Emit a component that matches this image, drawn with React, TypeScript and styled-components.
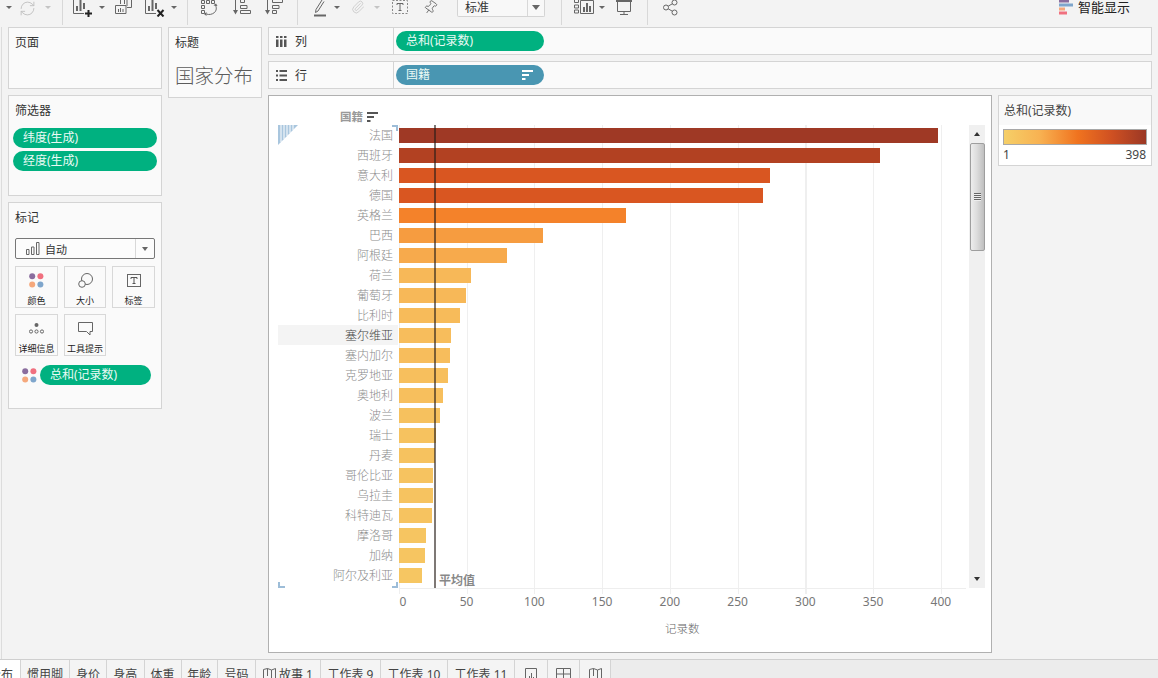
import React from "react";
import styled, { createGlobalStyle } from "styled-components";
import { RefreshCw, Paperclip, Pin } from "lucide-react";

const FONT = '"Noto Sans", "Noto Sans CJK SC", sans-serif';

const Global = createGlobalStyle`
  html, body { margin: 0; padding: 0; background: #f3f3f3; }
  body { font-family: ${FONT}; font-size: 12px; color: #333; }
`;

const Root = styled.div`
  width: 1158px;
  height: 678px;
  overflow: hidden;
  display: flex;
  flex-direction: column;
  background: #f3f3f3;
`;

const Toolbar = styled.div`
  height: 27px;
  flex: none;
  display: flex;
  align-items: flex-start;
`;

const Tool = styled.span<{ $ml: number; $w: number; $tint?: string }>`
  flex: none;
  display: flex;
  margin-left: ${(p) => p.$ml}px;
  width: ${(p) => p.$w}px;
  height: 17px;
  overflow: hidden;
  color: ${(p) => p.$tint ?? "#666"};
  svg { display: block; flex: none; }
`;

const ToolCaret = styled.i<{ $ml: number; $light?: boolean }>`
  flex: none;
  margin: 6px 0 0 ${(p) => p.$ml}px;
  border: 3px solid transparent;
  border-bottom-width: 0;
  border-top: 3px solid ${(p) => (p.$light ? "#c4c4c4" : "#666")};
`;

const Sep = styled.i<{ $ml: number }>`
  flex: none;
  margin-left: ${(p) => p.$ml}px;
  width: 1px;
  height: 25px;
  background: #d8d8d8;
`;

const Combo = styled.div`
  flex: none;
  margin-left: 19px;
  width: 88px;
  height: 17px;
  box-sizing: border-box;
  display: flex;
  background: #f8f8f8;
  border: 1px solid #d4d4d4;
  border-top: none;
  border-radius: 0 0 2px 2px;
`;

const ComboText = styled.span`
  flex: 1;
  padding-left: 7px;
  font-size: 12px;
  line-height: 16px;
  color: #333;
`;

const ComboArrow = styled.span`
  flex: none;
  width: 17px;
  border-left: 1px solid #d8d8d8;
  display: flex;
  justify-content: center;
  padding-top: 5px;
  box-sizing: border-box;
  &::after {
    content: "";
    height: 0;
    border: 4px solid transparent;
    border-bottom: 0;
    border-top: 5px solid #666;
  }
`;

const Smart = styled.div`
  margin-left: auto;
  padding-right: 28px;
  display: flex;
  gap: 5px;
  height: 15px;
`;

const SmartText = styled.span`
  font-size: 13px;
  line-height: 15px;
  color: #222;
`;

const Main = styled.div`
  flex: none;
  height: 632px;
  margin-left: 1px;
  border-left: 1px solid #dcdcdc;
  padding: 0 6px;
  display: flex;
  gap: 6px;
`;

const Column = styled.div<{ $w: number }>`
  flex: none;
  width: ${(p) => p.$w}px;
  display: flex;
  flex-direction: column;
  gap: 6px;
`;

const Panel = styled.section<{ $h: number }>`
  flex: none;
  box-sizing: border-box;
  height: ${(p) => p.$h}px;
  border: 1px solid #d4d4d4;
  background: #fafafa;
  padding: 7px 6px 0;
`;

const PanelTitle = styled.div`
  font-size: 12px;
  line-height: 16px;
  color: #333;
`;

const SheetTitle = styled.div`
  margin-top: 11px;
  font-size: 19.5px;
  line-height: 28px;
  font-weight: 300;
  color: #5c5c5c;
  white-space: nowrap;
`;

const FilterList = styled.div`
  margin: 9px -2px 0;
  display: flex;
  flex-direction: column;
  gap: 3px;
`;

const Pill = styled.div<{ $color?: string; $w?: number }>`
  box-sizing: border-box;
  flex: none;
  height: 20px;
  width: ${(p) => (p.$w ? `${p.$w}px` : "auto")};
  border-radius: 10px;
  padding: 0 11px 0 10px;
  background: ${(p) => p.$color ?? "#00b180"};
  color: #eafaf5;
  font-size: 12px;
  line-height: 20px;
  display: flex;
  justify-content: space-between;
  align-items: center;
  white-space: nowrap;
`;

const MarkSelect = styled.div`
  margin-top: 12px;
  width: 140px;
  height: 21px;
  box-sizing: border-box;
  border: 1px solid #777;
  border-radius: 2px;
  background: #fcfcfc;
  display: flex;
  align-items: center;
`;

const MarkSelectBody = styled.div`
  flex: 1;
  display: flex;
  align-items: center;
  gap: 5px;
  padding-left: 10px;
  font-size: 11px;
  color: #333;
`;

const MarkSelectArrow = styled.div`
  flex: none;
  align-self: stretch;
  width: 18px;
  border-left: 1px solid #d8d8d8;
  display: flex;
  align-items: center;
  justify-content: center;
  &::after {
    content: "";
    border: 3.5px solid transparent;
    border-bottom: 0;
    border-top: 4px solid #666;
  }
`;

const MarkGrid = styled.div`
  margin-top: 7px;
  display: grid;
  grid-template-columns: 43px 42px 43px;
  grid-auto-rows: 42px;
  gap: 6px;
`;

const MarkCard = styled.div`
  box-sizing: border-box;
  border: 1px solid #d8d8d8;
  display: flex;
  flex-direction: column;
  align-items: center;
  padding-top: 5px;
`;

const MarkIcon = styled.div`
  height: 18px;
  display: flex;
  align-items: center;
  justify-content: center;
  svg { display: block; }
`;

const MarkLabel = styled.div`
  margin-top: 6px;
  font-size: 9px;
  line-height: 12px;
  color: #222;
  white-space: nowrap;
`;

const MarkField = styled.div`
  margin: 9px 0 0 7px;
  display: flex;
  align-items: center;
  gap: 3px;
`;

const ShelfRow = styled.div`
  flex: none;
  box-sizing: border-box;
  height: 28px;
  border: 1px solid #d4d4d4;
  background: #fafafa;
  display: flex;
  align-items: center;
`;

const ShelfHead = styled.div`
  flex: none;
  box-sizing: border-box;
  width: 125px;
  height: 100%;
  border-right: 1px solid #d4d4d4;
  padding-left: 7px;
  display: flex;
  align-items: center;
  gap: 8px;
  color: #333;
  font-size: 12px;
`;

const ShelfPills = styled.div`
  margin-left: 2px;
  display: flex;
`;

const SortGlyph = styled.svg`
  display: block;
  flex: none;
`;

const SortSlot = styled.span`
  padding-top: 3px;
`;

const ContentRow = styled.div`
  display: flex;
  gap: 6px;
  align-items: flex-start;
`;

const ChartPanel = styled.div`
  flex: none;
  box-sizing: border-box;
  width: 724px;
  height: 558px;
  border: 1px solid #b0b0b0;
  background: #fff;
  display: flex;
  flex-direction: column;
`;

const ChartHead = styled.div`
  flex: none;
  height: 29px;
  width: 109px;
  box-sizing: border-box;
  padding-top: 13px;
  display: flex;
  justify-content: flex-end;
  gap: 4px;
  font-size: 11.5px;
  font-weight: 700;
  line-height: 16px;
  color: #999;
`;

const ChartBody = styled.div`
  flex: none;
  position: relative;
  height: 464px;
  display: flex;
  padding-left: 9px;
`;

const NameColumn = styled.div`
  flex: none;
  width: 120px;
`;

const NameRow = styled.div<{ $active?: boolean }>`
  box-sizing: border-box;
  height: 20px;
  padding-right: 5px;
  text-align: right;
  font-size: 12px;
  line-height: 21px;
  font-weight: 300;
  color: ${(p) => (p.$active ? "#444" : "#8c8c8c")};
  background: ${(p) => (p.$active ? "#f4f4f4" : "transparent")};
`;

const BarColumn = styled.div`
  flex: none;
  box-sizing: border-box;
  margin-left: 0.5px;
  width: 567px;
  height: 469px;
  background-image:
    linear-gradient(#eeeeee, #eeeeee),
    repeating-linear-gradient(90deg, #efefef 0 1px, transparent 1px 67.75px);
  background-size: 100% 1px, 100% 100%;
  background-position: 0 463px, 0 0;
  background-repeat: no-repeat;
`;

const BarRow = styled.div`
  height: 20px;
  box-sizing: border-box;
  padding-top: 3px;
`;

const Bar = styled.div<{ $color: string }>`
  height: 15px;
  background: ${(p) => p.$color};
`;

const MeanLine = styled.div`
  position: absolute;
  left: 165px;
  top: 0;
  width: 2px;
  height: 463px;
  background: rgba(40, 30, 25, 0.6);
`;

const MeanLabel = styled.div`
  position: absolute;
  left: 170px;
  top: 448px;
  font-size: 12px;
  line-height: 16px;
  font-weight: 700;
  color: #888;
`;

const Corner = styled.svg<{ $x: number; $y: number }>`
  position: absolute;
  left: ${(p) => p.$x}px;
  top: ${(p) => p.$y}px;
  display: block;
`;

const ScrollBar = styled.div`
  flex: none;
  margin-left: 3.5px;
  width: 16px;
  height: 463px;
  background: #f0f0f0;
  display: flex;
  flex-direction: column;
  align-items: center;
`;

const ScrollButton = styled.div<{ $down?: boolean }>`
  flex: none;
  height: 18px;
  width: 100%;
  display: flex;
  align-items: center;
  justify-content: center;
  &::after {
    content: "";
    border: 3.5px solid transparent;
    ${(p) =>
      p.$down
        ? "border-bottom: 0; border-top: 4px solid #333;"
        : "border-top: 0; border-bottom: 4px solid #333;"}
  }
`;

const ScrollThumb = styled.div`
  flex: none;
  box-sizing: border-box;
  width: 15px;
  height: 108px;
  border: 1px solid #9e9e9e;
  border-radius: 2px;
  background: linear-gradient(90deg, #ededed 0%, #dcdcdc 45%, #bfbfbf 100%);
  display: flex;
  align-items: center;
  justify-content: center;
`;

const ScrollGrip = styled.div`
  width: 7px;
  height: 8px;
  background: repeating-linear-gradient(#666 0 1px, #eee 1px 2px);
`;

const ScrollSpace = styled.div`
  flex: 1;
`;

const TickRow = styled.div`
  flex: none;
  margin-left: 96px;
  display: flex;
  height: 26px;
  align-items: center;
`;

const Tick = styled.div<{ $first?: boolean }>`
  flex: none;
  box-sizing: border-box;
  width: 67.75px;
  padding-left: ${(p) => (p.$first ? 8 : 0)}px;
  text-align: center;
  font-size: 12px;
  line-height: 16px;
  color: #777;
`;

const AxisTitle = styled.div`
  flex: none;
  margin: 6px 0 0 396px;
  font-size: 11.5px;
  line-height: 16px;
  font-weight: 300;
  color: #666;
`;

const LegendPanel = styled.div`
  flex: none;
  box-sizing: border-box;
  width: 154px;
  height: 71px;
  border: 1px solid #d4d4d4;
  background: #fff;
`;

const LegendHead = styled.div`
  height: 29px;
  padding: 6px 0 0 5px;
  box-sizing: border-box;
  background: #f9f9f9;
  font-size: 12px;
  line-height: 18px;
  color: #444;
`;

const LegendRamp = styled.div`
  margin: 4px 4px 0;
  height: 16px;
  box-sizing: border-box;
  border: 1px solid #a8a8a8;
  background: linear-gradient(90deg, #f5cf68 0%, #f8b252 25%, #f0731f 52%, #cf5022 76%, #9b3825 100%);
`;

const LegendScale = styled.div`
  margin: 2px 5px 0 4px;
  display: flex;
  justify-content: space-between;
  font-size: 12px;
  line-height: 16px;
  color: #444;
`;

const TabBar = styled.div`
  flex: none;
  height: 30px;
  box-sizing: border-box;
  border-top: 1px solid #cfcfcf;
  background: #ececec;
  display: flex;
`;

const Tab = styled.div<{ $w: number; $active?: boolean; $ml?: number }>`
  flex: none;
  box-sizing: border-box;
  width: ${(p) => p.$w}px;
  margin-left: ${(p) => p.$ml ?? 0}px;
  border-right: 1px solid #d4d4d4;
  background: ${(p) => (p.$active ? "#ffffff" : "#f4f4f4")};
  padding-top: 7px;
  display: flex;
  justify-content: center;
  align-items: flex-start;
  gap: 3px;
  font-size: 12px;
  line-height: 16px;
  color: #444;
  white-space: nowrap;
  svg { display: block; flex: none; margin-top: 1px; }
`;

const rows: [string, number, string][] = [
  ["法国", 398, "#9f3925"],
  ["西班牙", 355, "#b24122"],
  ["意大利", 274, "#d95621"],
  ["德国", 269, "#d95621"],
  ["英格兰", 168, "#f4822a"],
  ["巴西", 106.5, "#f69c40"],
  ["阿根廷", 80, "#f7aa4c"],
  ["荷兰", 53.5, "#f7b858"],
  ["葡萄牙", 49.5, "#f7b858"],
  ["比利时", 45.5, "#f7bb5a"],
  ["塞尔维亚", 38.5, "#f7bd5c"],
  ["塞内加尔", 38, "#f7bd5c"],
  ["克罗地亚", 36.5, "#f7bf5d"],
  ["奥地利", 32.5, "#f7bf5d"],
  ["波兰", 30.5, "#f6c15e"],
  ["瑞士", 27.5, "#f6c25f"],
  ["丹麦", 27, "#f6c25f"],
  ["哥伦比亚", 25.5, "#f6c360"],
  ["乌拉圭", 25.5, "#f6c360"],
  ["科特迪瓦", 24.5, "#f6c360"],
  ["摩洛哥", 20, "#f6c561"],
  ["加纳", 19.5, "#f6c561"],
  ["阿尔及利亚", 17, "#f6c662"],
];

const ticks = [0, 50, 100, 150, 200, 250, 300, 350, 400];

const Dots = () => (
  <svg width="15" height="15" viewBox="0 0 15 15">
    <circle cx="3.2" cy="3.2" r="3" fill="#8a6d9e" />
    <circle cx="11.4" cy="3.2" r="3" fill="#f0707f" />
    <circle cx="3.2" cy="11.4" r="3" fill="#f5a87c" />
    <circle cx="11.4" cy="11.4" r="3" fill="#7fa6cc" />
  </svg>
);

const Sort = ({ c }: { c: string }) => (
  <SortGlyph width="11" height="10" viewBox="0 0 11 10">
    <path d="M0 0h11v2H0zM0 4h7v2H0zM0 8h3.5v2H0z" fill={c} />
  </SortGlyph>
);

const S = { fill: "none", stroke: "currentColor", strokeWidth: 1 };

const AddSheet = () => (
  <svg width="19" height="17" viewBox="0 0 19 17">
    <path d="M.5 0v13.500H11" {...S} />
    <path d="M3 6h2v5H3zM6.500 0h2v11h-2zM10 3h2v6h-2z" fill="currentColor" />
    <path d="M15.500 10v7M12 13.500h7" stroke="#222" strokeWidth="2" fill="none" />
  </svg>
);

const Duplicate = () => (
  <svg width="17" height="14" viewBox="0 0 17 14">
    <path d="M5.500 0v4M16.500 0v7.500H12M.500 5.500h10.500v8H.500z" {...S} />
    <path d="M3 9h1v3H3zM5 8h1v4H5zM7.500 9h1v3h-1zM9 0h1v4H9zM11.500 0h1v6h-1z" fill="currentColor" />
  </svg>
);

const Clear = () => (
  <svg width="20" height="17" viewBox="0 0 20 17">
    <path d="M.5 0v13.500H11" {...S} />
    <path d="M3 6h2v5H3zM6.500 0h2v11h-2zM10 3h2v6h-2z" fill="currentColor" />
    <path d="M12.500 10l6 6.500M18.500 10l-6 6.500" stroke="#222" strokeWidth="2" fill="none" />
  </svg>
);

const Swap = () => (
  <svg width="18" height="16" viewBox="0 0 18 16">
    <path d="M.500 .500h3v3h-3zM5.500 .500h3v3h-3zM10.500 .500h3v3h-3zM.500 5.500h3v3h-3zM.500 10.500h3v3h-3z" {...S} />
    <path d="M14 4.500c2 3 1.500 6 -.5 8M5.500 14c2.500 1 5.500 .500 8 -1.500" {...S} />
    <path d="M12.500 5.500L15 3.500l1.500 2.500zM5.500 12v4l-2.500 -2z" fill="currentColor" />
  </svg>
);

const SortAsc = () => (
  <svg width="18" height="15" viewBox="0 0 18 15">
    <path d="M2.500 0v12" {...S} />
    <path d="M0 10h5l-2.500 4.500z" fill="currentColor" />
    <path d="M7.500 0v2.500h4V0M7.500 5.500h6.500v3H7.500zM7.500 10.500h10v3h-10z" {...S} />
  </svg>
);

const SortDesc = () => (
  <svg width="18" height="15" viewBox="0 0 18 15">
    <path d="M2.500 0v12" {...S} />
    <path d="M0 10h5l-2.500 4.500z" fill="currentColor" />
    <path d="M7.500 0v2.500h10V0M7.500 5.500h6.500v3H7.500zM7.500 10.500h4v3h-4z" {...S} />
  </svg>
);

const Pen = () => (
  <svg width="12" height="17" viewBox="0 0 12 17">
    <path d="M8 0L2 9.500l-.5 3 2.500 -1.500L10 1.500" {...S} />
    <path d="M0 15.500h12" stroke="#666" strokeWidth="2" />
  </svg>
);

const TextBox = () => (
  <svg width="16" height="14" viewBox="0 0 16 14">
    <rect x=".5" y=".5" width="15" height="13" {...S} stroke="#888" strokeDasharray="2 1.500" />
    <path d="M5 3.500h6M8 3.500v7M6.500 10.500h3M5 3.500v1.500M11 3.500v1.500" {...S} />
  </svg>
);

const ShowMe = () => (
  <svg width="20" height="15" viewBox="0 0 20 15">
    <path d="M.500 0v2.500h4V0M.500 5h4v3h-4zM.500 10h4v3h-4z" {...S} />
    <path d="M6.500 .500h13v13h-13z" {...S} />
    <path d="M9 7h2v5H9zM12 3h2v9h-2zM15 6h2v6h-2z" fill="currentColor" />
  </svg>
);

const Present = () => (
  <svg width="16" height="15" viewBox="0 0 16 15">
    <path d="M0 0h16v2H0z" fill="currentColor" />
    <path d="M1.500 2v9.500h13V2M8 11.500v3M4 14.500h8" {...S} />
  </svg>
);

const ShareNodes = () => (
  <svg width="15" height="16" viewBox="0 0 15 16">
    <circle cx="3" cy="7.500" r="2.500" {...S} />
    <circle cx="11.500" cy="2.500" r="2.500" {...S} />
    <circle cx="11.500" cy="12.500" r="2.500" {...S} />
    <path d="M5.200 6.200l4.100 -2.400M5.200 8.800l4.100 2.400" {...S} />
  </svg>
);

const BarsGlyph = () => (
  <svg width="14" height="13" viewBox="0 0 14 13">
    <path d="M.500 7.500h2.500v5H.500zM5.500 5h2.500v7.500H5.500zM10.500 .500h2.500v12h-2.500z" fill="none" stroke="#666" />
  </svg>
);

const MiniBars = () => (
  <svg width="12" height="15" viewBox="0 0 12 15">
    <path d="M.500 .500h11v14H.500z" {...S} stroke="#666" />
    <path d="M4 8h1v4H4zM6 5h1v7H6zM8 9h1v3H8z" fill="#666" />
  </svg>
);

const MiniGrid = () => (
  <svg width="15" height="15" viewBox="0 0 15 15">
    <path d="M.500 14V.500h14V14M.500 6h14M7.500 .500V14M14.500 6v8" {...S} stroke="#666" />
  </svg>
);

const MiniBook = () => (
  <svg width="13" height="15" viewBox="0 0 13 15">
    <path d="M.500 1.500L4.500 .500 8.500 2l4 -1.500V14M.500 1.500V14M4.500 .500V8M8.500 2v12" {...S} stroke="#666" />
  </svg>
);

export default function App() {
  return (
    <Root>
      <Global />
      <Toolbar>
        <ToolCaret $ml={6} />
        <Tool $ml={7} $w={17} $tint="#c0c0c0">
          <RefreshCw size={17} strokeWidth={1.3} />
        </Tool>
        <ToolCaret $ml={9} $light />
        <Sep $ml={11} />
        <Tool $ml={10} $w={19}><AddSheet /></Tool>
        <ToolCaret $ml={7} />
        <Tool $ml={10} $w={17}><Duplicate /></Tool>
        <Tool $ml={13} $w={20}><Clear /></Tool>
        <ToolCaret $ml={6} />
        <Sep $ml={10} />
        <Tool $ml={13} $w={18}><Swap /></Tool>
        <Tool $ml={14} $w={18}><SortAsc /></Tool>
        <Tool $ml={14} $w={18}><SortDesc /></Tool>
        <Sep $ml={14} />
        <Tool $ml={16} $w={12}><Pen /></Tool>
        <ToolCaret $ml={8} />
        <Tool $ml={11} $w={13} $tint="#c4c4c4">
          <Paperclip size={14} strokeWidth={1.3} />
        </Tool>
        <ToolCaret $ml={10} $light />
        <Tool $ml={12} $w={16}><TextBox /></Tool>
        <Tool $ml={15} $w={15}>
          <Pin size={15} strokeWidth={1.3} transform="rotate(35)" />
        </Tool>
        <Combo>
          <ComboText>标准</ComboText>
          <ComboArrow />
        </Combo>
        <Sep $ml={16} />
        <Tool $ml={12} $w={20}><ShowMe /></Tool>
        <ToolCaret $ml={5} />
        <Tool $ml={11} $w={16}><Present /></Tool>
        <Sep $ml={15} />
        <Tool $ml={15} $w={15}><ShareNodes /></Tool>
        <Smart>
          <svg width="14" height="15" viewBox="0 0 14 15">
            <path d="M0 0h10v2.500H0z" fill="#8a6d9e" />
            <path d="M0 3.500h14v3H0z" fill="#7fa6cc" />
            <path d="M0 7.500h6v3H0z" fill="#f5a87c" />
            <path d="M0 11.500h8v3H0z" fill="#f0707f" />
          </svg>
          <SmartText>智能显示</SmartText>
        </Smart>
      </Toolbar>

      <Main>
        <Column $w={154}>
          <Panel $h={62}>
            <PanelTitle>页面</PanelTitle>
          </Panel>
          <Panel $h={101}>
            <PanelTitle>筛选器</PanelTitle>
            <FilterList>
              <Pill>纬度(生成)</Pill>
              <Pill>经度(生成)</Pill>
            </FilterList>
          </Panel>
          <Panel $h={207}>
            <PanelTitle>标记</PanelTitle>
            <MarkSelect>
              <MarkSelectBody>
                <BarsGlyph />
                自动
              </MarkSelectBody>
              <MarkSelectArrow />
            </MarkSelect>
            <MarkGrid>
              <MarkCard>
                <MarkIcon><Dots /></MarkIcon>
                <MarkLabel>颜色</MarkLabel>
              </MarkCard>
              <MarkCard>
                <MarkIcon>
                  <svg width="15" height="15" viewBox="0 0 15 15">
                    <circle cx="9" cy="6" r="5.500" fill="none" stroke="#666" />
                    <circle cx="4" cy="11" r="3.300" fill="#fafafa" stroke="#666" />
                  </svg>
                </MarkIcon>
                <MarkLabel>大小</MarkLabel>
              </MarkCard>
              <MarkCard>
                <MarkIcon>
                  <svg width="14" height="13" viewBox="0 0 14 13">
                    <rect x=".5" y=".5" width="13" height="12" fill="none" stroke="#666" />
                    <path d="M4 3.500h6v1.500M4 5V3.500M7 3.500v6M5.500 9.500h3" fill="none" stroke="#555" />
                  </svg>
                </MarkIcon>
                <MarkLabel>标签</MarkLabel>
              </MarkCard>
              <MarkCard>
                <MarkIcon>
                  <svg width="15" height="11" viewBox="0 0 15 11">
                    <circle cx="7.500" cy="2" r="2" fill="#666" />
                    <circle cx="2" cy="8.500" r="1.600" fill="none" stroke="#666" />
                    <circle cx="7.500" cy="8.500" r="1.600" fill="none" stroke="#666" />
                    <circle cx="13" cy="8.500" r="1.600" fill="none" stroke="#666" />
                  </svg>
                </MarkIcon>
                <MarkLabel>详细信息</MarkLabel>
              </MarkCard>
              <MarkCard>
                <MarkIcon>
                  <svg width="15" height="14" viewBox="0 0 15 14">
                    <path d="M.500 .500h14v9h-2.500v3.500L8.500 9.500H.500z" fill="none" stroke="#666" />
                  </svg>
                </MarkIcon>
                <MarkLabel>工具提示</MarkLabel>
              </MarkCard>
            </MarkGrid>
            <MarkField>
              <Dots />
              <Pill $w={111}>总和(记录数)</Pill>
            </MarkField>
          </Panel>
        </Column>

        <Column $w={94}>
          <Panel $h={71}>
            <PanelTitle>标题</PanelTitle>
            <SheetTitle>国家分布</SheetTitle>
          </Panel>
        </Column>

        <Column $w={884}>
          <ShelfRow>
            <ShelfHead>
              <svg width="11" height="11" viewBox="0 0 11 11">
                <path d="M0 0h2.500v2H0zM4 0h2.500v2H4zM8 0h2.500v2H8zM0 3.500h2.500V11H0zM4 3.500h2.500V11H4zM8 3.500h2.500V11H8z" fill="#555" />
              </svg>
              列
            </ShelfHead>
            <ShelfPills>
              <Pill $w={148}>总和(记录数)</Pill>
            </ShelfPills>
          </ShelfRow>
          <ShelfRow>
            <ShelfHead>
              <svg width="11" height="11" viewBox="0 0 11 11">
                <path d="M0 0h2v2H0zM3.500 0H11v2H3.500zM0 4.500h2v2H0zM3.500 4.500H11v2H3.500zM0 9h2v2H0zM3.500 9H11v2H3.500z" fill="#555" />
              </svg>
              行
            </ShelfHead>
            <ShelfPills>
              <Pill $w={148} $color="#4996b2">
                国籍
                <Sort c="#ffffff" />
              </Pill>
            </ShelfPills>
          </ShelfRow>
          <ContentRow>
            <ChartPanel>
              <ChartHead>
                国籍
                <SortSlot><Sort c="#555" /></SortSlot>
              </ChartHead>
              <ChartBody>
                <NameColumn>
                  {rows.map(([name], i) => (
                    <NameRow key={name} $active={i === 10}>{name}</NameRow>
                  ))}
                </NameColumn>
                <BarColumn>
                  {rows.map(([name, value, color]) => (
                    <BarRow key={name}>
                      <Bar $color={color} style={{ width: value * 1.355 }} />
                    </BarRow>
                  ))}
                </BarColumn>
                <ScrollBar>
                  <ScrollButton />
                  <ScrollThumb><ScrollGrip /></ScrollThumb>
                  <ScrollSpace />
                  <ScrollButton $down />
                </ScrollBar>
                <MeanLine />
                <MeanLabel>平均值</MeanLabel>
                <Corner $x={9} $y={0} width="20" height="20" viewBox="0 0 20 20">
                  <path d="M0 0h20L0 20z" fill="#a9c6de" />
                  <path d="M3 0v17M6 0v14M9 0v11M12 0v8M15 0v5" stroke="#fff" strokeWidth="1" />
                </Corner>
                <Corner $x={123} $y={0} width="6" height="6" viewBox="0 0 6 6">
                  <path d="M0 1h5v5" fill="none" stroke="#9dbdd8" strokeWidth="2" />
                </Corner>
                <Corner $x={9} $y={457} width="7" height="6" viewBox="0 0 7 6">
                  <path d="M1 0v5h6" fill="none" stroke="#9dbdd8" strokeWidth="2" />
                </Corner>
                <Corner $x={123} $y={457} width="6" height="6" viewBox="0 0 6 6">
                  <path d="M0 5h5V0" fill="none" stroke="#9dbdd8" strokeWidth="2" />
                </Corner>
              </ChartBody>
              <TickRow>
                {ticks.map((t, i) => (
                  <Tick key={t} $first={i === 0}>{t}</Tick>
                ))}
              </TickRow>
              <AxisTitle>记录数</AxisTitle>
            </ChartPanel>
            <LegendPanel>
              <LegendHead>总和(记录数)</LegendHead>
              <LegendRamp />
              <LegendScale>
                <span>1</span>
                <span>398</span>
              </LegendScale>
            </LegendPanel>
          </ContentRow>
        </Column>
      </Main>

      <TabBar>
        <Tab $w={63} $ml={-42} $active>国家分布</Tab>
        <Tab $w={49}>惯用脚</Tab>
        <Tab $w={37}>身价</Tab>
        <Tab $w={37.5}>身高</Tab>
        <Tab $w={37}>体重</Tab>
        <Tab $w={36.5}>年龄</Tab>
        <Tab $w={38}>号码</Tab>
        <Tab $w={65}><MiniBook />故事 1</Tab>
        <Tab $w={60}>工作表 9</Tab>
        <Tab $w={67}>工作表 10</Tab>
        <Tab $w={67}>工作表 11</Tab>
        <Tab $w={33}><MiniBars /></Tab>
        <Tab $w={32}><MiniGrid /></Tab>
        <Tab $w={31}><MiniBook /></Tab>
      </TabBar>
    </Root>
  );
}
